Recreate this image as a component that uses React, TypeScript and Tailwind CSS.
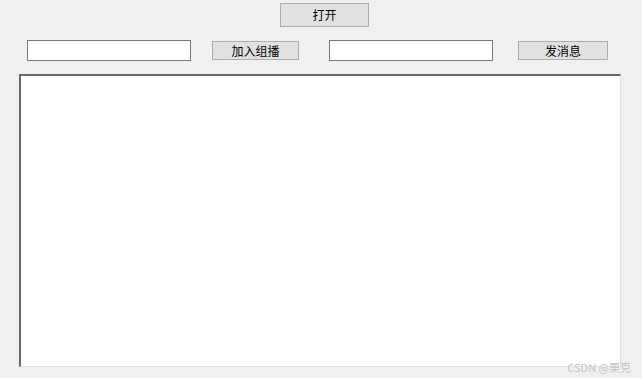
export default function App() {
  const font = { fontFamily: '"Noto Sans CJK SC", "Liberation Sans", sans-serif' };
  return (
    <div
      className="relative w-[642px] h-[378px] bg-[#f0f0f0] overflow-hidden text-[12px] text-black"
      style={font}
    >
      <div className="flex pt-[3px] pl-[280px]">
        <button className="w-[89px] h-[24px] border border-[#adadad] bg-[#e1e1e1] leading-none">
          打开
        </button>
      </div>
      <div className="flex items-center mt-[13px] h-[21px]">
        <input className="ml-[27px] w-[164px] h-[21px] border border-[#7a7a7a] bg-white outline-none" />
        <button className="ml-[21px] w-[87px] h-[19px] border border-[#adadad] bg-[#e1e1e1] leading-none">
          加入组播
        </button>
        <input className="ml-[30px] w-[164px] h-[21px] border border-[#7a7a7a] bg-white outline-none" />
        <button className="ml-[25px] w-[90px] h-[19px] border border-[#adadad] bg-[#e1e1e1] leading-none">
          发消息
        </button>
      </div>
      <div className="ml-[19px] mt-[13px] w-[602px] h-[293px] border-t-2 border-l-2 border-t-[#696969] border-l-[#696969] border-r border-b border-r-[#e3e3e3] border-b-[#e3e3e3] bg-white">
        <textarea className="w-full h-full resize-none outline-none bg-white" />
      </div>
      <span className="absolute right-[11px] bottom-[5px] text-[11px] leading-none text-[#c4c4c4]">
        CSDN @栗克
      </span>
    </div>
  );
}
